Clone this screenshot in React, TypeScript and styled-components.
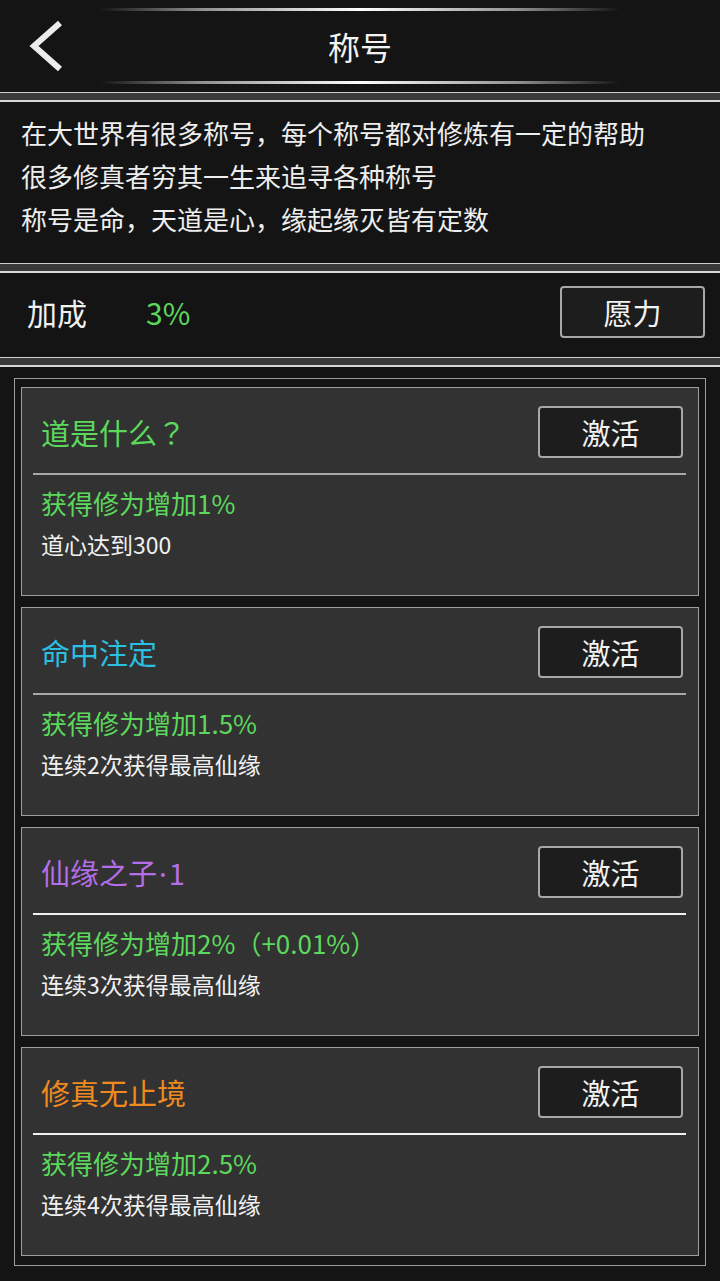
import React from "react";
import styled, { createGlobalStyle } from "styled-components";

const GlobalStyle = createGlobalStyle`
  html, body {
    margin: 0;
    padding: 0;
    background: #141414;
  }
  * {
    box-sizing: border-box;
  }
`;

const Page = styled.div`
  width: 720px;
  min-height: 1281px;
  background: #141414;
  font-family: "Noto Sans CJK SC", "Noto Sans", sans-serif;
  color: #f0f0f0;
  display: flex;
  flex-direction: column;
`;

const Header = styled.header`
  padding: 8px 0 8px;
  display: flex;
  flex-direction: column;
`;

// glowing bar above and below the title
const GlowLine = styled.div`
  height: 3px;
  margin: 0 100px;
  background: linear-gradient(
    90deg,
    rgba(255, 255, 255, 0),
    rgba(200, 200, 200, 0.7) 20%,
    #ffffff 50%,
    rgba(200, 200, 200, 0.7) 80%,
    rgba(255, 255, 255, 0)
  );
  border-radius: 2px;
`;

const TitleBar = styled.div`
  height: 70px;
  display: grid;
  grid-template-columns: 100px 1fr 100px;
  align-items: center;
`;

const BackBtn = styled.button`
  background: none;
  border: none;
  padding: 0 0 0 28px;
  height: 52px;
  display: flex;
  align-items: center;
  cursor: pointer;
`;

const Title = styled.h1`
  margin: 0;
  text-align: center;
  font-size: 32px;
  font-weight: 400;
  color: #f2f2f2;
`;

const Separator = styled.div`
  height: 10px;
  border-top: 1px solid #cfcfcf;
  border-bottom: 2px solid #d8d8d8;
  background: #3a3a3a;
`;

const Intro = styled.section`
  padding: 9px 21px 23px;
  font-size: 26px;
  line-height: 43px;
  color: #eeeeee;
`;

const IntroLine = styled.p`
  margin: 0;
  white-space: nowrap;
`;

const BonusRow = styled.section`
  height: 84px;
  display: flex;
  align-items: center;
  padding: 0 15px 6px 27px;
`;

const Label = styled.span`
  font-size: 30px;
  color: #f0f0f0;
`;

const Value = styled.span`
  font-size: 30px;
  color: #5ad65a;
  margin-left: 59px;
  flex: 1;
`;

const FrameBtn = styled.button<{ $width: number }>`
  width: ${(p) => p.$width}px;
  height: 52px;
  border: 2px solid #a8a8a8;
  border-radius: 4px;
  background: #1d1d1d;
  color: #f2f2f2;
  font-family: "Noto Sans CJK SC", "Noto Sans", sans-serif;
  font-size: 29px;
  padding: 0;
  cursor: pointer;
`;

const ListArea = styled.section`
  padding: 11px 14px 14px;
`;

const Frame = styled.div`
  border: 1px solid #9c9c9c;
  padding: 8px 6px 9px;
  display: flex;
  flex-direction: column;
  gap: 11px;
`;

const Card = styled.article`
  height: 209px;
  background: #323232;
  border: 1px solid #a0a0a0;
  display: flex;
  flex-direction: column;
`;

const CardHead = styled.div<{ $line: string }>`
  margin: 0 12px 0 11px;
  padding: 18px 3px 15px 8px;
  display: flex;
  align-items: center;
  justify-content: space-between;
  border-bottom: 2px solid ${(p) => p.$line};
`;

const CardTitle = styled.h2<{ $color: string }>`
  margin: 0;
  font-size: 29px;
  font-weight: 400;
  color: ${(p) => p.$color};
`;

// punctuation that the reference draws with different widths
const WideMark = styled.span`
  font-family: "Noto Sans CJK TC", "Noto Sans CJK SC", sans-serif;
`;

const NarrowMark = styled.span`
  font-family: "Noto Sans", "DejaVu Sans", sans-serif;
  margin: 0 2px;
`;

const CardBody = styled.div`
  padding: 10px 0 0 19px;
`;

const Effect = styled.p`
  margin: 0;
  font-size: 26px;
  line-height: 36px;
  color: #5cd95c;
`;

const Condition = styled.p`
  margin: 5px 0 0;
  font-size: 23px;
  line-height: 36px;
  color: #f0f0f0;
`;

const titles = [
  {
    name: (
      <>
        道是什么<WideMark>？</WideMark>
      </>
    ),
    key: "dao",
    color: "#5bd95b",
    line: "#a8a8a8",
    effect: "获得修为增加1%",
    cond: "道心达到300",
  },
  {
    name: "命中注定",
    key: "ming",
    color: "#2bc0e2",
    line: "#a8a8a8",
    effect: "获得修为增加1.5%",
    cond: "连续2次获得最高仙缘",
  },
  {
    name: (
      <>
        仙缘之子<NarrowMark>·</NarrowMark>1
      </>
    ),
    key: "xian",
    color: "#b46ee8",
    line: "#f0f0f0",
    effect: "获得修为增加2%（+0.01%）",
    cond: "连续3次获得最高仙缘",
  },
  {
    name: "修真无止境",
    key: "xiu",
    color: "#f08a1e",
    line: "#f0f0f0",
    effect: "获得修为增加2.5%",
    cond: "连续4次获得最高仙缘",
  },
];

function BackIcon() {
  return (
    <svg width="36" height="52" viewBox="0 0 36 52">
      <polyline
        points="32,3 6,26 32,49"
        fill="none"
        stroke="#ececec"
        strokeWidth="6"
        strokeLinejoin="miter"
      />
    </svg>
  );
}

export default function App() {
  return (
    <Page>
      <GlobalStyle />
      <Header>
        <GlowLine />
        <TitleBar>
          <BackBtn type="button" aria-label="back">
            <BackIcon />
          </BackBtn>
          <Title>称号</Title>
          <span />
        </TitleBar>
        <GlowLine />
      </Header>
      <Separator />
      <Intro>
        <IntroLine>在大世界有很多称号，每个称号都对修炼有一定的帮助</IntroLine>
        <IntroLine>很多修真者穷其一生来追寻各种称号</IntroLine>
        <IntroLine>称号是命，天道是心，缘起缘灭皆有定数</IntroLine>
      </Intro>
      <Separator />
      <BonusRow>
        <Label>加成</Label>
        <Value>3%</Value>
        <FrameBtn type="button" $width={145}>
          愿力
        </FrameBtn>
      </BonusRow>
      <Separator />
      <ListArea>
        <Frame>
          {titles.map((t) => (
            <Card key={t.key}>
              <CardHead $line={t.line}>
                <CardTitle $color={t.color}>{t.name}</CardTitle>
                <FrameBtn type="button" $width={145}>
                  激活
                </FrameBtn>
              </CardHead>
              <CardBody>
                <Effect>{t.effect}</Effect>
                <Condition>{t.cond}</Condition>
              </CardBody>
            </Card>
          ))}
        </Frame>
      </ListArea>
    </Page>
  );
}
